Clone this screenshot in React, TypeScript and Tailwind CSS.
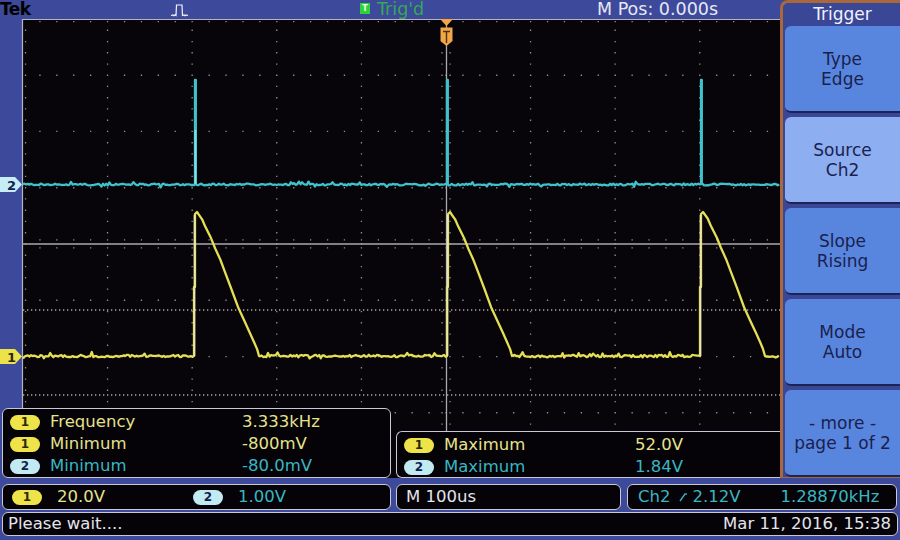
import React from 'react';

function rng(seed: number) {
  let a = seed;
  return () => {
    a |= 0;
    a = (a + 0x6d2b79f5) | 0;
    let t = Math.imul(a ^ (a >>> 15), 1 | a);
    t = (t + Math.imul(t ^ (t >>> 7), 61 | t)) ^ t;
    return ((t ^ (t >>> 14)) >>> 0) / 4294967296;
  };
}

const X0 = 23;
const DX = 84.6;
const Y0 = 19;
const DY = 56.25;
const XR = 780;

function gridPath() {
  let d = '';
  const dot = (x: number, y: number) => {
    d += `M${(x - 0.65).toFixed(1)} ${(y - 0.65).toFixed(1)}h1.3v1.3h-1.3z`;
  };
  for (let k = 1; k <= 8; k++) {
    if (k === 5) continue;
    const x = X0 + k * DX;
    for (let m = 1; m < 45; m++) dot(x, Y0 + (m * DY) / 5);
  }
  for (let j = 1; j <= 7; j++) {
    if (j === 4) continue;
    const y = Y0 + j * DY;
    for (let m = 1; X0 + (m * DX) / 5 < XR; m++) dot(X0 + (m * DX) / 5, y);
  }
  for (let m = 1; X0 + (m * DX) / 5 < XR; m++) dot(X0 + (m * DX) / 5, 21.5);
  for (let m = 1; m < 45; m++) dot(25.5, Y0 + (m * DY) / 5);
  const cy = Y0 + 4 * DY;
  const cx = X0 + 5 * DX;
  for (let m = 1; X0 + (m * DX) / 5 < XR; m++) {
    dot(X0 + (m * DX) / 5, cy - 4);
    dot(X0 + (m * DX) / 5, cy + 4);
  }
  for (let m = 1; m < 45; m++) {
    dot(cx - 4, Y0 + (m * DY) / 5);
    dot(cx + 4, Y0 + (m * DY) / 5);
  }
  return d;
}

const PULSES = [195, 448, 701];
const SPIKES = [195, 447, 701];

function ch1Points() {
  const r = rng(7);
  const pts: string[] = [];
  const shape: [number, number][] = [
    [-1, 356], [-1, 287], [0, 287], [0, 214], [2, 212], [4, 215], [7, 219], [10, 226], [13, 232],
    [16, 238], [20, 248], [25, 259], [30, 272], [36, 288], [43, 307], [49, 320], [55, 333],
    [59, 342], [62, 349], [64, 356],
  ];
  let x = X0;
  let pi = 0;
  while (x < XR) {
    const p = PULSES[pi];
    if (p !== undefined && x >= p - 1) {
      for (const [dx, y] of shape) {
        const jitter = dx > 3 && dx < 63 ? (r() - 0.5) * 1.2 : 0;
        pts.push(`${(p + dx + jitter * 0.5).toFixed(1)},${(y + jitter).toFixed(1)}`);
      }
      x = p + 65;
      pi++;
      continue;
    }
    let n = (r() - 0.5) * 2.4;
    if (r() < 0.1) n = (r() - 0.6) * 7;
    pts.push(`${x.toFixed(1)},${(356 + n).toFixed(1)}`);
    x += 1.6;
  }
  return pts.join(' ');
}

function ch2Points() {
  const r = rng(3);
  const pts: string[] = [];
  let x = X0;
  let si = 0;
  while (x < XR) {
    const s = SPIKES[si];
    if (s !== undefined && x >= s) {
      pts.push(`${s},184 ${s},80 ${s + 0.8},80 ${s + 0.8},184`);
      x = s + 1.5;
      si++;
      continue;
    }
    let n = (r() - 0.5) * 1.8;
    if (r() < 0.08) n = (r() - 0.5) * 6;
    pts.push(`${x.toFixed(1)},${(184.5 + n).toFixed(1)}`);
    x += 1.6;
  }
  return pts.join(' ');
}

function Scope() {
  const cy = Y0 + 4 * DY;
  const cx = X0 + 5 * DX;
  return (
    <svg className="absolute left-0 top-0" width={780} height={459} viewBox="0 19 780 459">
      <rect x={22} y={19} width={758} height={459} fill="#07050a" />
      <line x1={22} y1={19.5} x2={780} y2={19.5} stroke="#b4b4c4" strokeWidth={1.2} />
      <line x1={22.5} y1={19} x2={22.5} y2={478} stroke="#b4b4c4" strokeWidth={1.2} />
      <path d={gridPath()} fill="#8f8f96" />
      <line x1={22} y1={cy} x2={780} y2={cy} stroke="#a9a9ae" strokeWidth={1.3} />
      <line x1={cx + 0.5} y1={19} x2={cx + 0.5} y2={478} stroke="#a9a9ae" strokeWidth={1.3} />
      <line x1={23} y1={310} x2={780} y2={310} stroke="#acaca2" strokeWidth={1.4} strokeDasharray="1.3 2.7" />
      <line x1={23} y1={395} x2={780} y2={395} stroke="#acaca2" strokeWidth={1.4} strokeDasharray="1.3 2.7" />
      <polyline points={ch2Points()} fill="none" stroke="#3fc2cb" strokeWidth={2.3} strokeLinejoin="round" />
      <line x1={195.4} y1={130} x2={195.4} y2={184} stroke="#7fe0e6" strokeWidth={2} />
      <polyline points={ch1Points()} fill="none" stroke="#e4df55" strokeWidth={2.3} strokeLinejoin="round" />
      {PULSES.map((p) => (
        <line key={p} x1={p - 0.5} y1={356} x2={p - 0.5} y2={215} stroke="#e8e6b8" strokeWidth={1.6} />
      ))}
      <polygon points="440,19 453,19 446.5,26" fill="#f2a645" />
      <path d="M440.5 27.5 H452.5 V41 L446.5 46 L440.5 41 Z" fill="#f2a645" />
      <path d="M443 31.5 H450 M446.5 31.5 V43" stroke="#4a3212" strokeWidth={1.4} fill="none" />
      <path d="M0 177 H15 L22 184.5 L15 192 H0 Z" fill="#c6edf5" />
      <text x={11.5} y={189.5} fontSize={13} fontWeight={700} fill="#13204d" textAnchor="middle" fontFamily="DejaVu Sans, sans-serif">2</text>
      <path d="M0 349 H15 L22 356.5 L15 364 H0 Z" fill="#ece24a" />
      <text x={11.5} y={361.5} fontSize={13} fontWeight={700} fill="#2a2608" textAnchor="middle" fontFamily="DejaVu Sans, sans-serif">1</text>
    </svg>
  );
}

function Badge({ n }: { n: string }) {
  const yellow = n === '1';
  return (
    <span
      className={`inline-flex items-center justify-center rounded-full w-[30px] h-[15px] text-[12px] font-bold leading-none ${
        yellow ? 'bg-[#efe34a] text-[#2b2708]' : 'bg-[#c2eaf3] text-[#13204d]'
      }`}
    >
      {n}
    </span>
  );
}

function MeasRow({ n, label, value, labelW }: { n: string; label: string; value: string; labelW: string }) {
  const yellow = n === '1';
  return (
    <div className={`flex items-center h-[22px] ${yellow ? 'text-[#e6e28c]' : 'text-[#39b7c1]'}`}>
      <Badge n={n} />
      <span className={`ml-[10px] ${labelW}`}>{label}</span>
      <span>{value}</span>
    </div>
  );
}

function MenuButton({ top, bottom, selected }: { top: string; bottom: string; selected?: boolean }) {
  return (
    <div
      className={`h-[87px] shrink-0 rounded-l-[6px] flex flex-col items-center justify-center text-[17px] leading-[20px] text-[#1a1f4e] border-b-2 border-[#1c2456] ${
        selected ? 'bg-[#8daef1]' : 'bg-[#5886df]'
      }`}
    >
      <span>{top}</span>
      <span>{bottom}</span>
    </div>
  );
}

function PulseIcon() {
  return (
    <svg width={20} height={19} viewBox="0 0 20 19">
      <polyline
        points="1,15.5 3,15 4,15.8 5,15 6,15.5 6.5,5 12,5 12.5,15.5 14,15 15,15.7 16,15 18,15.5"
        fill="none"
        stroke="#f4f4f8"
        strokeWidth={1.2}
      />
    </svg>
  );
}

function SlopeIcon() {
  return (
    <svg width={12} height={14} viewBox="0 0 12 14" className="ml-[8px] mr-[2px]">
      <polyline points="2,11 7,4" fill="none" stroke="#3ab7c1" strokeWidth={1.3} />
      <polyline points="6.5,4 9,4" fill="none" stroke="#3ab7c1" strokeWidth={1.3} />
    </svg>
  );
}

export default function App() {
  return (
    <div className="w-[900px] h-[540px] bg-[#3d499b] flex flex-col overflow-hidden font-['DejaVu_Sans',sans-serif] text-[16.5px]">
      <div className="flex h-[478px]">
        <div className="w-[780px] flex flex-col">
          <div className="h-[19px] flex items-center leading-[19px]">
            <span className="w-[170px] font-bold text-black text-[17px] tracking-[-0.6px] -mt-[1px]">Tek</span>
            <span className="w-[190px] flex items-center">
              <PulseIcon />
            </span>
            <span className="w-[237px] flex items-center">
              <span className="w-[10px] h-[11px] bg-[#2fd23c] flex items-center justify-center text-[8px] font-bold text-[#e8ffe8] leading-none -mt-[2px]">
                T
              </span>
              <span className="ml-[7px] text-[#34a853] text-[17.5px]">Trig'd</span>
            </span>
            <span className="text-[#e6e8f2] text-[17.5px]">M Pos: 0.000s</span>
          </div>
          <div className="relative flex-1 flex flex-col justify-end">
            <Scope />
            <div className="relative flex items-end pl-[2px] gap-[5px]">
              <div className="w-[389px] h-[70px] bg-[#050308] border-[1.5px] border-[#c8c8d6] rounded-[6px] pl-[7px] pt-[2px]">
                <MeasRow n="1" label="Frequency" value="3.333kHz" labelW="w-[192px]" />
                <MeasRow n="1" label="Minimum" value="-800mV" labelW="w-[192px]" />
                <MeasRow n="2" label="Minimum" value="-80.0mV" labelW="w-[192px]" />
              </div>
              <div className="flex-1 h-[47px] bg-[#050308] border-[1.5px] border-r-0 border-[#c8c8d6] rounded-l-[6px] pl-[7px] pt-[2px]">
                <MeasRow n="1" label="Maximum" value="52.0V" labelW="w-[191px]" />
                <MeasRow n="2" label="Maximum" value="1.84V" labelW="w-[191px]" />
              </div>
            </div>
          </div>
        </div>
        <div className="w-[120px] h-[478px] bg-[#3a4696] border-l-[3px] border-t-[3px] border-b-[1px] border-[#a8683c] rounded-tl-[8px] flex flex-col">
          <div className="h-[23px] shrink-0 flex items-center justify-center text-[#f0f2fa] text-[17px] pl-[2px] pt-[1px]">Trigger</div>
          <div className="flex-1 flex flex-col gap-[4px] pl-[2px]">
            <MenuButton top="Type" bottom="Edge" />
            <MenuButton top="Source" bottom="Ch2" selected />
            <MenuButton top="Slope" bottom="Rising" />
            <MenuButton top="Mode" bottom="Auto" />
            <MenuButton top="- more -" bottom="page 1 of 2" />
          </div>
        </div>
      </div>
      <div className="flex flex-col gap-[2px] px-[2px] pt-[6px]">
        <div className="flex h-[26px]">
          <div className="w-[389px] bg-[#050308] border-[1.5px] border-[#c8c8d6] rounded-[6px] flex items-center pl-[9px]">
            <Badge n="1" />
            <span className="ml-[15px] w-[136px] text-[#e6e28c]">20.0V</span>
            <Badge n="2" />
            <span className="ml-[15px] text-[#39b7c1]">1.00V</span>
          </div>
          <div className="ml-[5px] w-[225px] bg-[#050308] border-[1.5px] border-[#c8c8d6] rounded-[6px] flex items-center pl-[9px] text-[#e4e4ec]">
            M 100us
          </div>
          <div className="ml-[6px] w-[270px] bg-[#050308] border-[1.5px] border-[#c8c8d6] rounded-[6px] flex items-center pl-[10px] text-[#39b7c1]">
            <span>Ch2</span>
            <SlopeIcon />
            <span className="w-[88px]">2.12V</span>
            <span>1.28870kHz</span>
          </div>
        </div>
        <div className="h-[24px] w-[896px] bg-[#050308] border-[1.5px] border-[#c8c8d6] rounded-[6px] flex items-center justify-between pl-[5px] pr-[6px] text-[#e4e4ec]">
          <span>Please wait....</span>
          <span>Mar 11, 2016, 15:38</span>
        </div>
      </div>
    </div>
  );
}
